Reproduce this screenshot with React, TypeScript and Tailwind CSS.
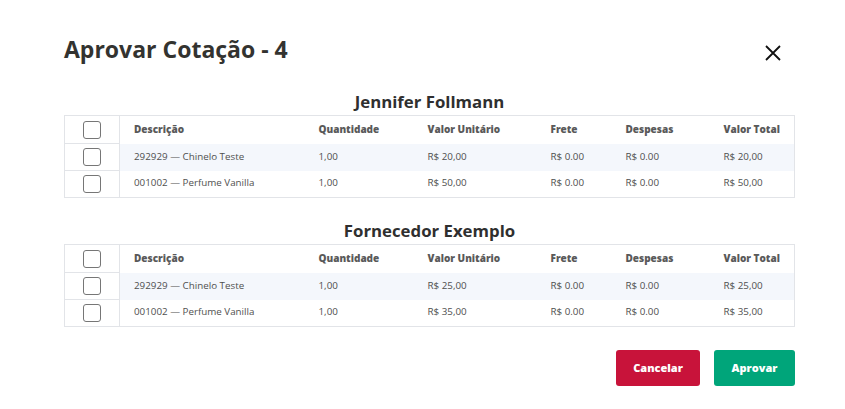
import React from 'react';

type Item = {
  desc: string;
  qty: string;
  unit: string;
  frete: string;
  despesas: string;
  total: string;
};

type Supplier = {
  name: string;
  items: Item[];
};

const suppliers: Supplier[] = [
  {
    name: 'Jennifer Follmann',
    items: [
      { desc: '292929 — Chinelo Teste', qty: '1,00', unit: 'R$ 20,00', frete: 'R$ 0.00', despesas: 'R$ 0.00', total: 'R$ 20,00' },
      { desc: '001002 — Perfume Vanilla', qty: '1,00', unit: 'R$ 50,00', frete: 'R$ 0.00', despesas: 'R$ 0.00', total: 'R$ 50,00' },
    ],
  },
  {
    name: 'Fornecedor Exemplo',
    items: [
      { desc: '292929 — Chinelo Teste', qty: '1,00', unit: 'R$ 25,00', frete: 'R$ 0.00', despesas: 'R$ 0.00', total: 'R$ 25,00' },
      { desc: '001002 — Perfume Vanilla', qty: '1,00', unit: 'R$ 35,00', frete: 'R$ 0.00', despesas: 'R$ 0.00', total: 'R$ 35,00' },
    ],
  },
];

const font = { fontFamily: '"Open Sans", "Noto Sans", sans-serif' };

function Box() {
  return <span className="block mx-auto h-[18px] w-[18px] rounded-[3px] border border-[#767676] bg-white" />;
}

function SupplierTable({ supplier }: { supplier: Supplier }) {
  return (
    <div>
      <h2 className="text-center text-[16.8px] font-bold leading-[22px] text-[#2f2f2f]">{supplier.name}</h2>
      <table className="mt-[2px] w-full table-fixed border-collapse border border-[#e2e4e8]">
        <colgroup>
          <col className="w-[55px]" />
          <col className="w-[185px]" />
          <col className="w-[109px]" />
          <col className="w-[123px]" />
          <col className="w-[75px]" />
          <col className="w-[98px]" />
          <col />
        </colgroup>
        <thead>
          <tr className="h-[28px] whitespace-nowrap text-left text-[10px] text-[#595959]">
            <th className="border-r border-b border-[#e2e4e8]">
              <Box />
            </th>
            <th className="pl-[14px] font-extrabold">Descrição</th>
            <th className="pl-[14px] font-extrabold">Quantidade</th>
            <th className="pl-[14px] font-extrabold">Valor Unitário</th>
            <th className="pl-[14px] font-extrabold">Frete</th>
            <th className="pl-[14px] font-extrabold">Despesas</th>
            <th className="pl-[14px] font-extrabold">Valor Total</th>
          </tr>
        </thead>
        <tbody className="whitespace-nowrap text-[9.8px] text-[#4f4f4f]">
          {supplier.items.map((it, i) => (
            <tr key={i} className={i % 2 === 0 ? 'h-[27px] bg-[#f4f7fc]' : 'h-[27px] bg-white'}>
              <td className={i === supplier.items.length - 1 ? 'border-r border-[#e2e4e8] bg-white' : 'border-r border-b border-[#e2e4e8] bg-white'}>
                <Box />
              </td>
              <td className="pl-[14px]">{it.desc}</td>
              <td className="pl-[14px]">{it.qty}</td>
              <td className="pl-[14px]">{it.unit}</td>
              <td className="pl-[14px]">{it.frete}</td>
              <td className="pl-[14px]">{it.despesas}</td>
              <td className="pl-[14px]">{it.total}</td>
            </tr>
          ))}
        </tbody>
      </table>
    </div>
  );
}

export default function App() {
  return (
    <div className="min-h-[409px] w-[845px] bg-white" style={font}>
      <div className="pl-[64px] pr-[50px] pt-[32px]">
        <div className="flex items-start justify-between">
          <h1 className="text-[23px] font-bold leading-[34px] text-[#333330]">Aprovar Cotação - 4</h1>
          <button type="button" className="mt-[12px] mr-[13px] text-[#111]">
            <svg width="18" height="18" viewBox="0 0 18 18" fill="none" stroke="currentColor" strokeWidth="1.8">
              <path d="M2 2L16 16M16 2L2 16" />
            </svg>
          </button>
        </div>
        <div className="mt-[25px] flex flex-col gap-[22px]">
          {suppliers.map((s) => (
            <SupplierTable key={s.name} supplier={s} />
          ))}
        </div>
        <div className="mt-[23px] flex justify-end gap-[14px]">
          <button type="button" className="h-[36px] w-[84px] rounded-[3px] bg-[#c8133a] text-[11px] font-extrabold text-white">
            Cancelar
          </button>
          <button type="button" className="h-[36px] w-[81px] rounded-[3px] bg-[#00a57a] text-[11px] font-extrabold text-white">
            Aprovar
          </button>
        </div>
      </div>
    </div>
  );
}
